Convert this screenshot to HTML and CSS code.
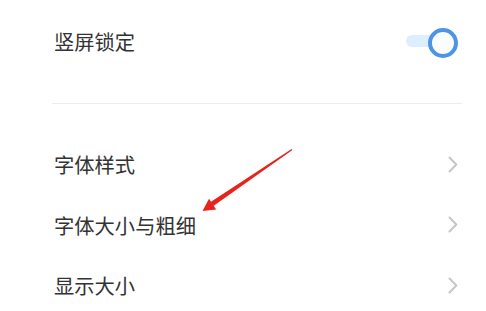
FILE: index.html
```html
<!DOCTYPE html>
<html lang="zh">
<head>
<meta charset="utf-8">
<link rel="stylesheet" href="styles.css">
</head>
<body>
<div class="page">
  <div class="row top">
    <span class="label">竖屏锁定</span>
    <div class="toggle"><div class="track"></div><div class="knob"></div></div>
  </div>
  <div class="divider"></div>
  <div class="list">
    <div class="row item">
      <span class="label">字体样式</span>
      <svg class="chev" width="10" height="17" viewBox="0 0 10 17"><path d="M1.5 1.5 L8.3 8.5 L1.5 15.5" fill="none" stroke="#c6c6c6" stroke-width="2" stroke-linecap="round" stroke-linejoin="round"/></svg>
    </div>
    <div class="row item">
      <span class="label">字体大小与粗细</span>
      <svg class="chev" width="10" height="17" viewBox="0 0 10 17"><path d="M1.5 1.5 L8.3 8.5 L1.5 15.5" fill="none" stroke="#c6c6c6" stroke-width="2" stroke-linecap="round" stroke-linejoin="round"/></svg>
    </div>
    <div class="row item">
      <span class="label">显示大小</span>
      <svg class="chev" width="10" height="17" viewBox="0 0 10 17"><path d="M1.5 1.5 L8.3 8.5 L1.5 15.5" fill="none" stroke="#c6c6c6" stroke-width="2" stroke-linecap="round" stroke-linejoin="round"/></svg>
    </div>
  </div>
  <svg class="arrow" width="486" height="311" viewBox="0 0 486 311">
    <polygon points="292.4,149.9 213.4,206.0 210.6,202.0 291.6,149.1" fill="#e8231e"/>
    <polygon points="202.5,211 209.0,198.8 216.2,209.4" fill="#e8231e"/>
  </svg>
</div>
</body>
</html>
```
FILE: styles.css
```css
html, body {
  margin: 0;
  padding: 0;
  background: #ffffff;
}
.page {
  position: relative;
  width: 486px;
  height: 311px;
  overflow: hidden;
  font-family: "Noto Sans CJK SC", "Noto Sans", sans-serif;
  color: #333333;
}
.row {
  display: flex;
  align-items: center;
  justify-content: space-between;
  padding: 0 28px 0 54px;
}
.top {
  height: 82px;
}
.label {
  font-size: 20.3px;
  line-height: 1;
}
.toggle {
  position: relative;
  width: 52px;
  height: 30px;
  margin-top: 4px;
}
.track {
  position: absolute;
  left: 0;
  top: 7px;
  width: 38px;
  height: 12px;
  border-radius: 6px;
  background: #ddeeff;
}
.knob {
  position: absolute;
  right: 0;
  top: 0;
  width: 22px;
  height: 22px;
  border: 4px solid #4d94e6;
  border-radius: 50%;
  background: #fafcff;
}
.divider {
  height: 1px;
  background: #ededed;
  margin: 21px 24px 0 52px;
}
.list {
  margin-top: 30px;
}
.item {
  height: 60.5px;
}
.chev {
  display: block;
}
.arrow {
  position: absolute;
  left: 0;
  top: 0;
  pointer-events: none;
}
```
